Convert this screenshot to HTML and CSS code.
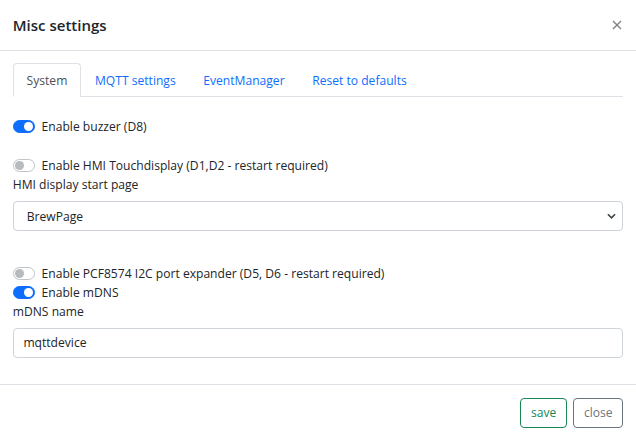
FILE: index.html
```html
<!DOCTYPE html>
<html lang="en">
<head>
<meta charset="utf-8">
<title>Misc settings</title>
<link rel="stylesheet" href="styles.css">
</head>
<body>
<div class="modal">
  <div class="modal-header">
    <h5 class="modal-title">Misc settings</h5>
    <button class="btn-close" type="button" aria-label="Close">
      <svg viewBox="0 0 10 10" width="10" height="10"><path d="M1 1L9 9M9 1L1 9" stroke="currentColor" stroke-width="1.4" fill="none"/></svg>
    </button>
  </div>
  <div class="modal-body">
    <ul class="nav-tabs">
      <li><a class="nav-link active">System</a></li>
      <li><a class="nav-link">MQTT settings</a></li>
      <li><a class="nav-link">EventManager</a></li>
      <li><a class="nav-link">Reset to defaults</a></li>
    </ul>
    <div class="tab-pane">
      <label class="form-check"><span class="switch on"></span>Enable buzzer (D8)</label>
      <div class="spacer"></div>
      <label class="form-check"><span class="switch"></span>Enable HMI Touchdisplay (D1,D2 - restart required)</label>
      <div class="form-label">HMI display start page</div>
      <div class="select-wrap mb">
        <select class="form-select">
          <option>BrewPage</option>
        </select>
      </div>
      <div class="spacer"></div>
      <label class="form-check"><span class="switch"></span>Enable PCF8574 I2C port expander (D5, D6 - restart required)</label>
      <label class="form-check"><span class="switch on"></span>Enable mDNS</label>
      <div class="form-label">mDNS name</div>
      <input class="form-control mb" type="text" value="mqttdevice">
    </div>
  </div>
  <div class="modal-footer">
    <button class="btn btn-save" type="button">save</button>
    <button class="btn btn-close-footer" type="button">close</button>
  </div>
</div>
</body>
</html>
```
FILE: styles.css
```css
html, body {
  margin: 0;
  padding: 0;
  background: #fff;
}
body {
  font-family: "Open Sans", "Noto Sans", sans-serif;
  font-size: 12.1px;
  line-height: 19.2px;
  color: #212529;
}
.modal {
  width: 636px;
  background: #fff;
}
.modal-header {
  display: flex;
  align-items: center;
  justify-content: space-between;
  padding: 12.8px 12.8px;
  border-bottom: 1px solid #dee2e6;
}
.modal-title {
  margin: 0;
  font-size: 15px;
  line-height: 24px;
  font-weight: 600;
  color: #212529;
}
.btn-close {
  border: 0;
  background: transparent;
  padding: 0;
  margin-right: 1px;
  width: 10px;
  height: 10px;
  color: #808080;
  display: flex;
}
.modal-body {
  padding: 12.8px;
}
.nav-tabs {
  list-style: none;
  margin: 0;
  padding: 0;
  display: flex;
  border-bottom: 1px solid #dee2e6;
}
.nav-tabs li {
  margin-bottom: -1px;
}
.nav-link {
  display: block;
  padding: 6.4px 12.8px;
  border: 1px solid transparent;
  border-top-left-radius: 4px;
  border-top-right-radius: 4px;
  color: #0d6efd;
  cursor: pointer;
}
.nav-link.active {
  color: #495057;
  background: #fff;
  border-color: #dee2e6 #dee2e6 #fff;
}
.tab-pane {
  padding-top: 19.8px;
}
.spacer {
  height: 19.6px;
}
.form-check {
  display: flex;
  align-items: center;
  height: 19.2px;
  padding-left: 0;
}
.switch {
  position: relative;
  box-sizing: border-box;
  width: 22.4px;
  height: 12.8px;
  border-radius: 6.4px;
  border: 1px solid #bfc4c9;
  background: #fff;
  margin-right: 6.4px;
  flex: none;
}
.switch::after {
  content: "";
  position: absolute;
  top: 1px;
  left: 1px;
  width: 8.8px;
  height: 8.8px;
  border-radius: 50%;
  background: #b8bbbe;
}
.switch.on {
  background: #0d6efd;
  border-color: #0d6efd;
}
.switch.on::after {
  left: auto;
  right: 1px;
  background: #fff;
}
.form-label {
  margin-bottom: 6.4px;
}
.mb {
  margin-bottom: 12.8px;
}
.form-select, .form-control {
  display: block;
  box-sizing: border-box;
  width: 100%;
  height: 30.6px;
  font-family: inherit;
  font-size: 12.1px;
  line-height: 19.2px;
  color: #212529;
  background-color: #fff;
  border: 1px solid #ced4da;
  border-radius: 4px;
  margin-top: 0;
}
.form-select {
  -webkit-appearance: none;
  appearance: none;
  padding: 4.8px 24px 4.8px 13px;
  background-image: url("data:image/svg+xml,%3csvg xmlns='http://www.w3.org/2000/svg' viewBox='0 0 10 6'%3e%3cpath fill='none' stroke='%23404448' stroke-width='1.8' d='M1 1l4 4 4-4'/%3e%3c/svg%3e");
  background-repeat: no-repeat;
  background-position: right 6px center;
  background-size: 9px 6px;
}
.form-control {
  padding: 4.8px 9.6px;
}
.modal-footer {
  display: flex;
  justify-content: flex-end;
  align-items: center;
  padding: 9.6px;
  border-top: 1px solid #dee2e6;
}
.btn {
  margin: 3.2px;
  padding: 4.8px 9.6px;
  font-family: inherit;
  font-size: 12.1px;
  line-height: 19.2px;
  background: #fff;
  border-radius: 4px;
  cursor: pointer;
}
.btn-save {
  color: #198754;
  border: 1px solid #198754;
}
.btn-close-footer {
  color: #6c757d;
  border: 1px solid #6c757d;
}
```
